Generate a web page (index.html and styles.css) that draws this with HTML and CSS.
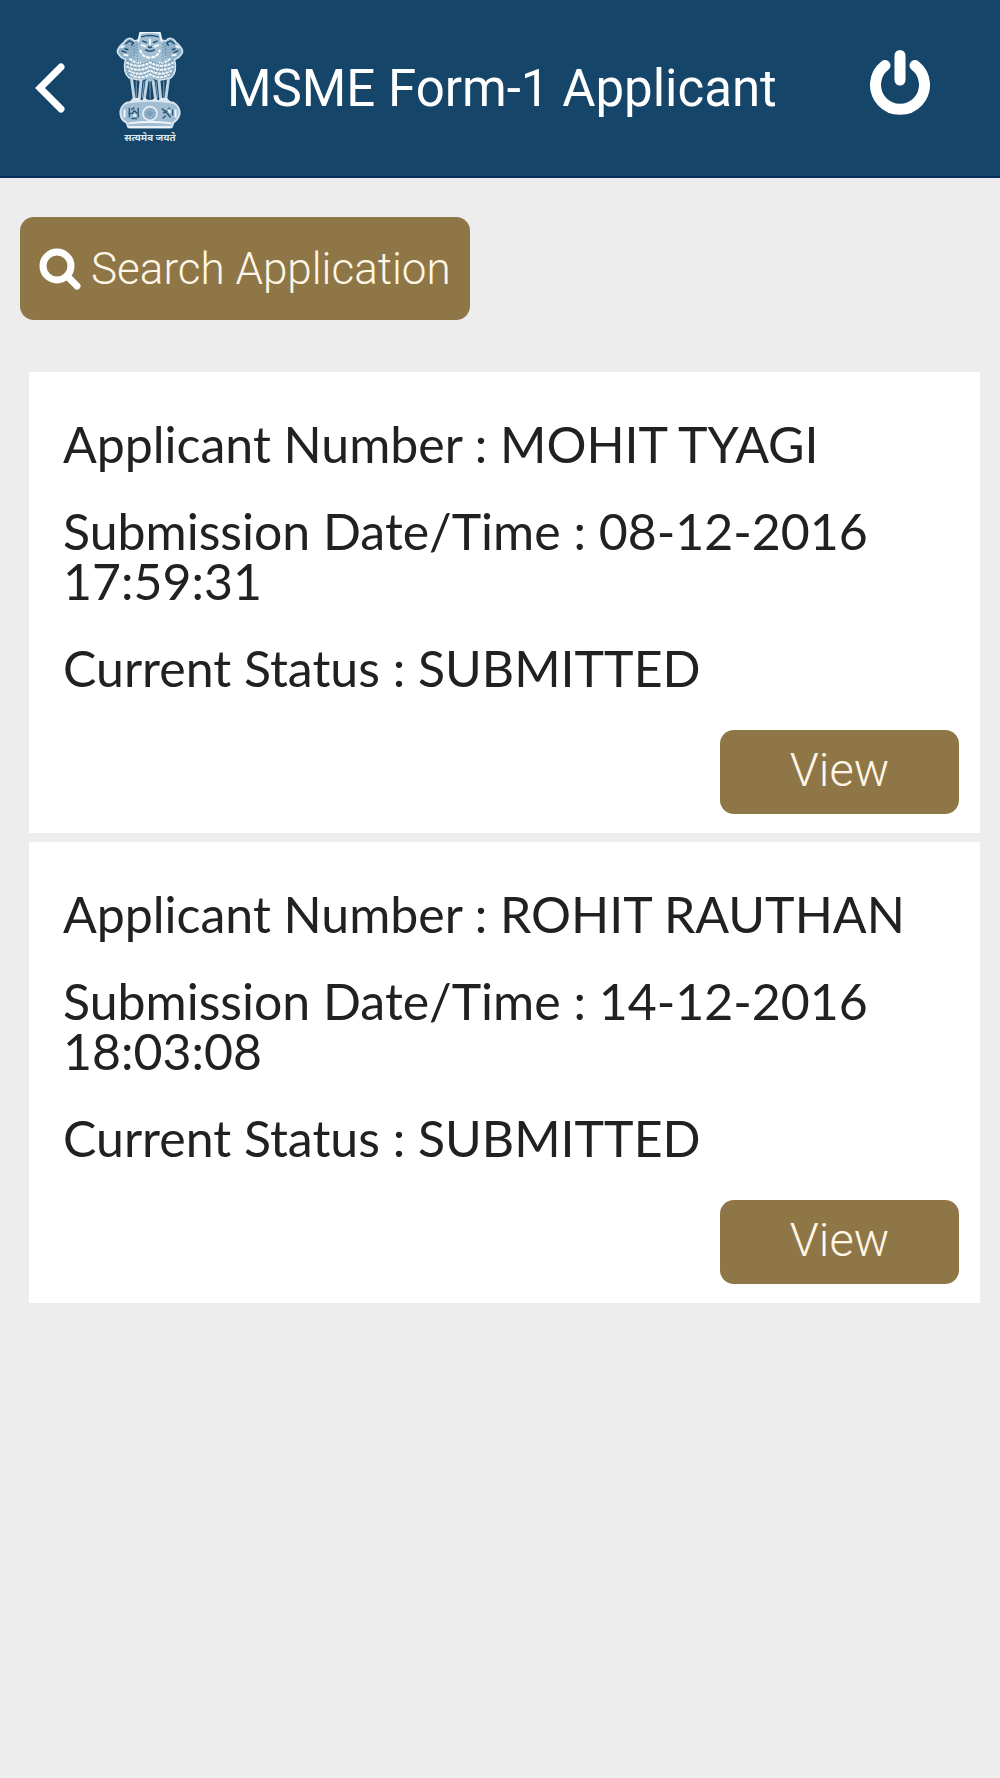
FILE: index.html
```html
<!DOCTYPE html>
<html lang="en">
<head>
  <meta charset="UTF-8">
  <meta name="viewport" content="width=device-width, initial-scale=1.0">
  <title>MSME Form-1 Applicant</title>
  <link rel="stylesheet" href="styles.css">
</head>
<body>

  <!-- Header -->
  <header class="header">
    <button class="icon-btn" type="button" aria-label="Back">
      <svg class="back-icon" viewBox="0 0 30 50">
        <path d="M26 4L5 25L26 46" fill="none" stroke="#fff" stroke-width="7" stroke-linecap="round" stroke-linejoin="miter"/>
      </svg>
    </button>
    <svg class="emblem" viewBox="0 0 68 114">
      <!-- side lions -->
      <g fill="#8fb0c8" stroke="#d9e6ef" stroke-width="1.5">
        <path d="M22 8L18 9C15 5 10 6 8 10C4 13 0 18 1 21C3 25 6 27 9 28C7 36 8 43 13 47L24 49Z"/>
        <path d="M46 8L50 9C53 5 58 6 60 10C64 13 68 18 67 21C65 25 62 27 59 28C61 36 60 43 55 47L44 49Z"/>
      </g>
      <!-- middle lion -->
      <path d="M24 1Q34 -1 44 1L46 10L48 22C57 30 57 42 50 47L46 46L43 50L38 48L34 51L30 48L25 50L22 46L18 47C11 42 11 30 20 22L22 10Z" fill="#a3bfd3"/>
      <path d="M22 10L24 1Q34 -1 44 1L46 10" fill="none" stroke="#eef4f8" stroke-width="2"/>
      <!-- manes -->
      <g fill="none" stroke="#f2f7fa" stroke-width="2" stroke-dasharray="3 1">
        <path d="M10 31Q22 38 34 31Q46 38 58 31M10 35Q22 42 34 35Q46 42 58 35M12 39Q23 46 34 39Q45 46 56 39M14 43Q24 49 34 43Q44 49 54 43M13 27Q20 33 25 31M55 27Q48 33 43 31"/>
      </g>
      <g fill="none" stroke="#41708f" stroke-width="1" stroke-dasharray="1 2">
        <path d="M11 29Q23 36 34 29Q45 36 57 29M10 33Q22 40 34 33Q46 40 58 33M11 37Q23 44 34 37Q45 44 57 37M13 41Q24 48 34 41Q44 48 55 41M21 12V31M47 12V31M18 14V28M50 14V28"/>
      </g>
      <!-- faces -->
      <g fill="none" stroke="#1f5074" stroke-width="1.500">
        <path d="M25 5Q34 2 43 5M26 9L31 11M42 9L37 11M32 15L34 16L36 15M29 18Q34 21 39 18M9 12L13 9L17 11L15 14M5 19L10 21M8 17L12 18M59 12L55 9L51 11L53 14M63 19L58 21M60 17L56 18"/>
      </g>
      <path d="M25 13L30 15M43 13L38 15M34 7V13M4 16L8 14M64 16L60 14M7 23L12 24M61 23L56 24" fill="none" stroke="#f2f7fa" stroke-width="2"/>
      <path d="M24 18Q26 26 34 26Q42 26 44 18" fill="none" stroke="#fff" stroke-width="2" stroke-dasharray="4 1"/>
      <!-- legs -->
      <g fill="none" stroke="#c1d4e2" stroke-width="3">
        <path d="M15 46L18 69M25 48L23 69M31 49L28 70M37 49L40 70M43 48L45 69M53 46L50 69"/>
      </g>
      <g fill="none" stroke="#7fa2bb" stroke-width="1">
        <path d="M34 51V68M20 49L20 66M48 49L48 66M28 50L26 67M40 50L42 67"/>
      </g>
      <path d="M12 72L17 67H23L25 70L29 67L34 71L39 67L43 70L45 67H51L56 72Z" fill="#dde8f0"/>
      <!-- abacus -->
      <path d="M10 72Q34 68 58 72Q65 76 64 84Q62 90 58 92L56 97H12L10 92Q5 90 4 84Q3 76 10 72Z" fill="#a0bdd1" stroke="#d9e6ef" stroke-width="2"/>
      <circle cx="34" cy="83" r="7" fill="#7c9fb9" stroke="#e0eaf2" stroke-width="2"/>
      <circle cx="34" cy="83" r="4" fill="none" stroke="#a8c3d6" stroke-width="2" stroke-dasharray="1 1"/>
      <g fill="none" stroke="#2b5c7d" stroke-width="1.500">
        <path d="M13 77V87M12 83H16L18 80L21 83M22 77V87M15 79L18 77M15 88H21M46 78L50 81L55 87M54 77L50 82L47 82M47 88L50 85M57 79V85"/>
      </g>
      <path d="M8 79V87M60 79V87M17 85H20M52 79L55 82" stroke="#f2f7fa" stroke-width="2"/>
      <path d="M12 93Q34 90 56 93M13 97H55" fill="none" stroke="#eef4f8" stroke-width="2"/>
      <text class="motto" x="34" y="111" text-anchor="middle">सत्यमेव जयते</text>
    </svg>
    <h1 class="title">MSME Form-1 Applicant</h1>
    <button class="icon-btn power-btn" type="button" aria-label="Log out">
      <svg class="power-icon" viewBox="0 0 60 66">
        <path d="M15 15.500A24.500 24.500 0 1 0 45 15.500M30 5.500V30" fill="none" stroke="#fff" stroke-width="11" stroke-linecap="round"/>
      </svg>
    </button>
  </header>

  <main class="content">
    <button class="btn search-btn" type="button">
      <svg class="search-icon" viewBox="0 0 42 42">
        <circle cx="18" cy="18" r="14" fill="none" stroke="#fff" stroke-width="7"/>
        <path d="M28 28L38 38" stroke="#fff" stroke-width="7" stroke-linecap="round"/>
      </svg>
      Search Application
    </button>

    <!-- Applications -->
    <section class="list">
      <article class="card">
        <p>Applicant Number : MOHIT TYAGI</p>
        <p>Submission Date/Time : 08-12-2016 17:59:31</p>
        <p>Current Status : SUBMITTED</p>
        <button class="btn view-btn" type="button">View</button>
      </article>
      <article class="card">
        <p>Applicant Number : ROHIT RAUTHAN</p>
        <p>Submission Date/Time : 14-12-2016 18:03:08</p>
        <p>Current Status : SUBMITTED</p>
        <button class="btn view-btn" type="button">View</button>
      </article>
    </section>
  </main>

</body>
</html>
```
FILE: styles.css
```css
* {
  box-sizing: border-box;
}

body {
  margin: 0;
  background: #ededed;
  color: #212121;
  font-family: Lato, sans-serif;
}

button {
  border: none;
  cursor: pointer;
}

/* Header */
.header {
  display: flex;
  align-items: center;
  padding: 32px 70px 32px 35px;
  background: #15466a;
  border-bottom: 2px solid #06305c;
}

.icon-btn {
  display: flex;
  padding: 0;
  background: none;
}

.back-icon {
  width: 30px;
  height: 50px;
}

.emblem {
  width: 68px;
  height: 112px;
  margin-left: 51px;
}

.motto {
  font-family: "Noto Sans", "Noto Sans Devanagari", sans-serif;
  font-size: 10px;
  font-weight: bold;
  fill: #dce8f0;
}

.title {
  flex: 1;
  margin: 0 0 0 43px;
  color: #fff;
  font-family: Roboto, sans-serif;
  font-size: 51px;
  font-weight: 400;
}

.power-btn {
  padding-bottom: 10px;
}

.power-icon {
  width: 60px;
  height: 66px;
}

/* Buttons */
.btn {
  background: #8e7646;
  border-radius: 14px;
  color: #fff6e8;
  font-family: Roboto, sans-serif;
  font-weight: 300;
}

.content {
  padding: 39px 20px 0;
}

.search-btn {
  display: flex;
  align-items: center;
  gap: 10px;
  height: 103px;
  padding: 0 19px;
  font-size: 44px;
}

.search-icon {
  width: 42px;
  height: 42px;
}

.view-btn {
  align-self: flex-end;
  width: 239px;
  height: 84px;
  padding-bottom: 6px;
  font-size: 47px;
}

/* Cards */
.list {
  display: flex;
  flex-direction: column;
  gap: 9px;
  margin: 52px 0 0 9px;
}

.card {
  display: flex;
  flex-direction: column;
  gap: 37px;
  padding: 47px 21px 19px 34px;
  background: #fff;
  font-size: 50px;
  line-height: 50px;
}

.card p {
  margin: 0;
}
```
